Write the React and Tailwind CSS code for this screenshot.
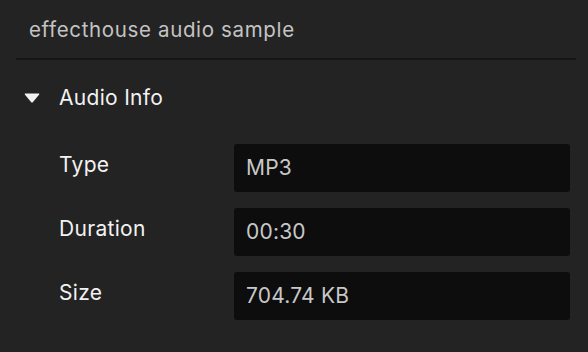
export default function App() {
  const rows = [
    ["Type", "MP3"],
    ["Duration", "00:30"],
    ["Size", "704.74 KB"],
  ];
  return (
    <div className="w-[588px] h-[352px] bg-[#232323] overflow-hidden" style={{ fontFamily: "Inter, 'Noto Sans', sans-serif" }}>
      <div className="h-[58px] pl-[29px] flex items-center pt-[3px] text-[20.5px] tracking-[0.65px] text-[#c4c4c4]">effecthouse audio sample</div>
      <div className="ml-4 mr-3 h-[2px] bg-[#161616]" />
      <div className="h-[76px] flex items-center">
        <div className="w-[59px] pl-[23px] flex items-center">
          <svg width="18" height="12" viewBox="0 0 18 12">
            <path d="M2.5 1.5 H15.5 Q17 1.5 16 2.8 L10 10 Q9 11.2 8 10 L2 2.8 Q1 1.5 2.5 1.5 Z" fill="#f2f2f2" />
          </svg>
        </div>
        <span className="text-[21px] tracking-[0.3px] text-[#f2f2f2]">Audio Info</span>
      </div>
      <div className="mt-2 flex flex-col gap-4">
        {rows.map(([k, v]) => (
          <div key={k} className="flex">
            <div className="w-[234px] pl-[59px] h-12 flex items-center pb-[7px] text-[21px] tracking-[0.3px] text-[#f2f2f2]">{k}</div>
            <div className="w-[336px] h-12 rounded-[3px] bg-[#0d0d0d] pl-3 flex items-center text-[21px] tracking-[0.2px] text-[#c8c8c8]">{v}</div>
          </div>
        ))}
      </div>
    </div>
  );
}
